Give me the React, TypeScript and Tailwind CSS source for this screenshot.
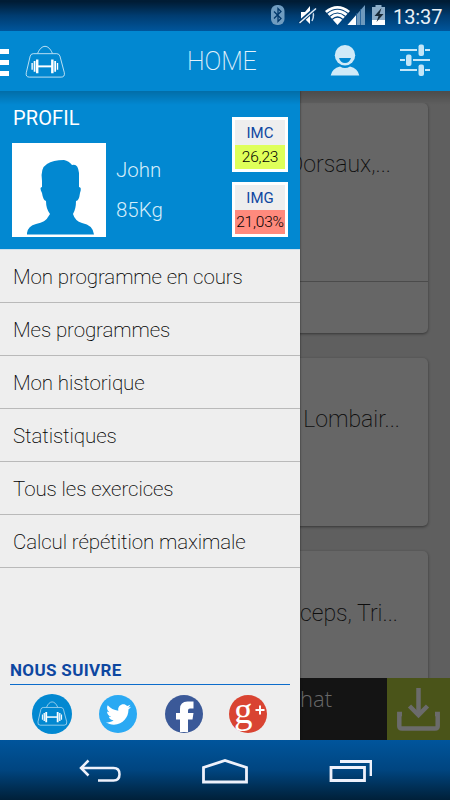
import type { ReactNode } from 'react';
import { FaTwitter } from 'react-icons/fa';

const menuItems = [
  'Mon programme en cours',
  'Mes programmes',
  'Mon historique',
  'Statistiques',
  'Tous les exercices',
  'Calcul répétition maximale',
];

function BagIcon({ className }: { className?: string }) {
  return (
    <svg viewBox="0 0 42 34" className={className} fill="none" stroke="#fff">
      <path d="M13 9C15 4.500 17.500 2 20.500 2S26 4.500 28 9" strokeWidth="1" opacity=".75" />
      <path
        d="M8.500 9.500H32.500Q35 9.500 35.800 12L40.300 29Q41 33.500 37 33.500H4.500Q.5 33.500 1.300 29L5.300 12Q6 9.500 8.500 9.500Z"
        strokeWidth="1"
        opacity=".75"
      />
      <path d="M13 22.500H28" strokeWidth="2" />
      <path d="M12.500 15.500V29.500M28 15.500V29.500" strokeWidth="2.500" />
      <path d="M9.800 17V28M30.900 17V28" strokeWidth="1.800" />
      <path d="M7.300 19V26M33.300 19V26" strokeWidth="1.400" />
    </svg>
  );
}

function StatusBar() {
  return (
    <div className="flex h-[31px] shrink-0 items-center justify-end bg-gradient-to-b from-[#001c35] from-5% via-[#003c70] via-50% to-[#00569c]">
      <svg viewBox="0 0 116 22" className="h-[22px] w-[116px]">
        <rect x="0" y="0" width="13.500" height="20" rx="6" fill="#6f9cc0" />
        <path d="M3 6.500L10 13.500L7 16.500V3.500L10 6.500L3 13.500" fill="none" stroke="#00376a" strokeWidth="1.300" />
        <path d="M30 7H34L39 1V19L34 14H30Z" fill="#fff" />
        <path d="M41 5Q44 10 41 16" fill="none" stroke="#c5d9ea" strokeWidth="1.500" />
        <path d="M28 18L44 4" stroke="#003d72" strokeWidth="4" />
        <path d="M28.500 18L45 3.500" stroke="#e5eef6" strokeWidth="1.500" />
        <path d="M54 6Q66.500 -4 79 6L66.500 20Z" fill="#fff" />
        <g fill="none" stroke="#00407a" strokeWidth="1.200">
          <path d="M56 8.500Q66.500 0 77 8.500" />
          <path d="M58.500 11.500Q66.500 4.500 74.500 11.500" />
          <path d="M61 14.500Q66.500 9.500 72 14.500" />
        </g>
        <path d="M94 0V20H76.500Z" fill="#6e99bd" />
        <path d="M85 10.300V20H76.500Z" fill="#fff" />
        <path d="M85.500 8V20M89.500 4V20" stroke="#1c5a94" strokeWidth=".8" />
        <path d="M101 2H104.500V0H110.500V2H114V20H101Z" fill="#8cadc8" />
        <path d="M101 15H114V20H101Z" fill="#fff" />
        <path d="M110.500 3L103.500 11H107.500L105.500 17L112.500 9H108.500Z" fill="#182a38" />
      </svg>
      <span className="mr-[7px] ml-[6px] w-[50px] whitespace-nowrap pt-[2px] text-[20px] leading-none tracking-[-0.1px] text-[#e9f0f6]">13:37</span>
    </div>
  );
}

function Header() {
  return (
    <header className="flex h-[60px] shrink-0 items-center bg-[#0288d1]">
      <div className="flex w-[9px] flex-col gap-[6px] pt-[3px]">
        <span className="h-[5px] bg-white" />
        <span className="h-[5px] bg-white" />
        <span className="h-[5px] bg-white" />
      </div>
      <BagIcon className="ml-[16px] h-[34px] w-[41px]" />
      <h1 className="ml-[121px] w-[143px] pt-px text-[25px] font-extralight leading-none tracking-[-0.1px] text-[#e3f3fc]">HOME</h1>
      <svg viewBox="0 0 30 32" className="mb-[3px] h-[32px] w-[30px]" fill="#cfeaf8">
        <circle cx="15" cy="11.300" r="10.200" />
        <path d="M9 14H21Q19.500 19 15 19T9 14Z" fill="#0288d1" />
        <path d="M.7 31.500Q2 24.500 10 22.500Q15 25.500 20 22.500Q28 24.500 29.300 31.500Z" />
      </svg>
      <svg viewBox="0 0 32 34" className="mb-[2px] ml-[40px] h-[34px] w-[32px]" fill="#c3e6f8">
        <path d="M0 6H17V8H0ZM25 6H30V8H25ZM0 16H5V18H0ZM13 16H30V18H13ZM0 26H17V28H0ZM25 26H30V28H25Z" />
        <rect x="18.500" y="1.500" width="5.500" height="11.500" rx="2" />
        <rect x="6" y="11.500" width="5.500" height="11.500" rx="2" />
        <rect x="18.500" y="21.500" width="5.500" height="11.500" rx="2" />
      </svg>
    </header>
  );
}

function Card({ title, className, children }: { title: string; className: string; children?: ReactNode }) {
  return (
    <section className={`mr-[22px] ml-[22px] shrink-0 rounded-[5px] bg-[#666] text-right shadow-[0_1px_3px_rgba(0,0,0,0.45)] ${className}`}>
      <h2 className="text-[23px] font-extralight leading-[30px] text-[#0d0d0d]">{title}</h2>
      {children}
    </section>
  );
}

function Background() {
  return (
    <main className="flex h-full flex-col bg-[#5f5f5f] pt-[12px]">
      <div className="flex min-h-0 flex-1 flex-col gap-[25px] overflow-hidden">
        <Card title="Dorsaux,..." className="flex h-[230px] flex-col pt-[47px] [&>h2]:pr-[37px]">
          <div className="mt-auto h-[52px] border-t border-[#4b4b4b]" />
        </Card>
        <Card title="Lombair..." className="h-[168px] pt-[47px] [&>h2]:pr-[28px]" />
        <Card title="Biceps, Tri..." className="h-[168px] pt-[48px] [&>h2]:pr-[30px]" />
      </div>
      <div className="flex h-[62px] shrink-0 bg-[#141414]">
        <div className="flex-1 pt-[6px] pr-[55px] text-right font-['Open_Sans',sans-serif] text-[22px] font-light leading-[28px] text-[#686868]">
          Chat
        </div>
        <div className="flex w-[63px] items-center justify-center bg-[#4a5419]">
          <svg viewBox="0 0 43 43" className="h-[43px] w-[43px]" fill="none" stroke="#6b6b6b">
            <path d="M21.500 0V27" strokeWidth="4.500" />
            <path d="M12.500 18L21.500 27L30.500 18" strokeWidth="4.500" />
            <path d="M5 26H2.300V38Q2.300 40.500 5 40.500H38Q40.700 40.500 40.700 38V26H38" strokeWidth="4.500" />
          </svg>
        </div>
      </div>
    </main>
  );
}

function Measure({ label, value, color }: { label: string; value: string; color: string }) {
  return (
    <div className="h-[55px] w-[56px] border-[3px] border-white bg-[#eee] text-center">
      <div className="h-[25px] text-[15px] leading-[26px] text-[#0d47a1]">{label}</div>
      <div className={`flex h-[24px] items-center justify-center whitespace-nowrap pt-px text-[15.500px] font-light leading-none tracking-[-0.2px] text-black ${color}`}>
        {value}
      </div>
    </div>
  );
}

function Profile() {
  return (
    <section className="flex h-[159px] shrink-0 border-b border-[#cbdfed] bg-[#0288d1] pl-[12px]">
      <div className="w-[104px]">
        <h2 className="mt-[15px] pl-px text-[20px] leading-[25px] tracking-[0.1px] text-white">PROFIL</h2>
        <svg viewBox="0 0 94 94" className="mt-[12px] h-[94px] w-[94px] bg-white">
          <path
            d="M15 91.500V90Q16 83 24 81Q34 79 36 74L38 71Q34 66 34 58Q31 57 30 50Q27 44 30 44V38Q28 25 35 21Q41 17 52 17Q57 18 60 22Q66 20 67 30V44Q70 44 68 50Q67 58 64 58Q64 66 61 71Q63 78 70 80Q81 82 82 91.500Z"
            fill="#0288d1"
          />
        </svg>
      </div>
      <div className="w-[116px] pt-[64px] text-[20.500px] font-light leading-[30px] text-[#d5edfa]">
        <p>John</p>
        <p className="mt-[10px]">85Kg</p>
      </div>
      <div className="flex flex-col gap-[10px] pt-[26px]">
        <Measure label="IMC" value="26,23" color="bg-[#dfff59]" />
        <Measure label="IMG" value="21,03%" color="bg-[#ff8a7d]" />
      </div>
    </section>
  );
}

function SocialLinks() {
  return (
    <div className="flex items-center pt-[9px] pl-[32px]">
      <a className="flex h-[40px] w-[40px] items-center justify-center rounded-full bg-[#0288d1]">
        <BagIcon className="mb-[2px] h-[26px] w-[31px]" />
      </a>
      <a className="ml-[27px] flex h-[38px] w-[38px] items-center justify-center rounded-full bg-[#2aa9f3] text-white">
        <FaTwitter size={25} />
      </a>
      <a className="ml-[28px] h-[38px] w-[38px] rounded-full bg-[#3b5998]">
        <svg viewBox="0 0 38 38" className="h-[38px] w-[38px]" fill="#fff">
          <path d="M15 37V24.500H11V18H15V14Q15 6.500 22.500 6.500H28.500V13.500H25Q23 13.500 23 15.500V18H28.500L27.500 24.500H23V37Z" />
        </svg>
      </a>
      <a className="ml-[26px] h-[38px] w-[38px] rounded-full bg-[#d94432]">
        <svg viewBox="0 0 38 38" className="h-[38px] w-[38px] overflow-visible">
          <text x="5" y="28" fontFamily="Liberation Serif, serif" fontSize="37" fill="#fff">g</text>
          <path d="M26.500 15H35.500M31 10.500V19.500" stroke="#fff" strokeWidth="2" />
        </svg>
      </a>
    </div>
  );
}

function Drawer() {
  return (
    <aside className="absolute inset-y-0 left-0 flex w-[300px] flex-col bg-[#eee] shadow-[0_0_2px_rgba(0,0,0,0.6)]">
      <Profile />
      <nav>
        {menuItems.map((item) => (
          <a key={item} className="flex h-[53px] items-center border-b border-[#b9b9b9] pt-[2px] pl-[13px] text-[20.500px] font-extralight tracking-[-0.1px] text-black">
            {item}
          </a>
        ))}
      </nav>
      <div className="mt-auto h-[83px] shrink-0">
        <h3 className="mx-[10px] h-[28px] border-b border-[#0c6ccb] text-[17px] font-bold leading-[26px] tracking-[0.35px] text-[#0d47a1]">NOUS SUIVRE</h3>
        <SocialLinks />
      </div>
    </aside>
  );
}

function NavigationBar() {
  return (
    <div className="flex h-[60px] shrink-0 items-center justify-between bg-gradient-to-b from-[#00559c] via-[#004580] via-50% to-[#002039] px-[78px] pt-[2px]">
      <svg viewBox="0 0 44 24" className="h-[24px] w-[44px]" fill="none" stroke="#eef1fb" strokeWidth="2.500">
        <path d="M10.500 1.500L3 9L10.500 16.500M3 9H35.500Q41.500 9 41.500 15.200T35.500 21.500H20" />
      </svg>
      <svg viewBox="0 0 46 26" className="h-[26px] w-[46px]" fill="none" stroke="#eef1fb" strokeWidth="2.800">
        <path d="M1.500 24V9.500L23 2.500L44.500 9.500V24Z" />
      </svg>
      <svg viewBox="0 0 44 24" className="h-[24px] w-[44px]" fill="none" stroke="#eef1fb" strokeWidth="2.800">
        <path d="M3 8.500H36.500V21.500H3ZM12 2.500H43V17" />
      </svg>
    </div>
  );
}

export default function App() {
  return (
    <div className="flex h-[800px] w-[450px] flex-col overflow-hidden font-[Roboto,sans-serif]">
      <StatusBar />
      <Header />
      <div className="relative h-[649px] shrink-0 overflow-hidden">
        <Background />
        <Drawer />
        <div className="pointer-events-none absolute inset-x-0 top-0 h-[14px] bg-gradient-to-b from-black/20 to-transparent" />
      </div>
      <NavigationBar />
    </div>
  );
}
